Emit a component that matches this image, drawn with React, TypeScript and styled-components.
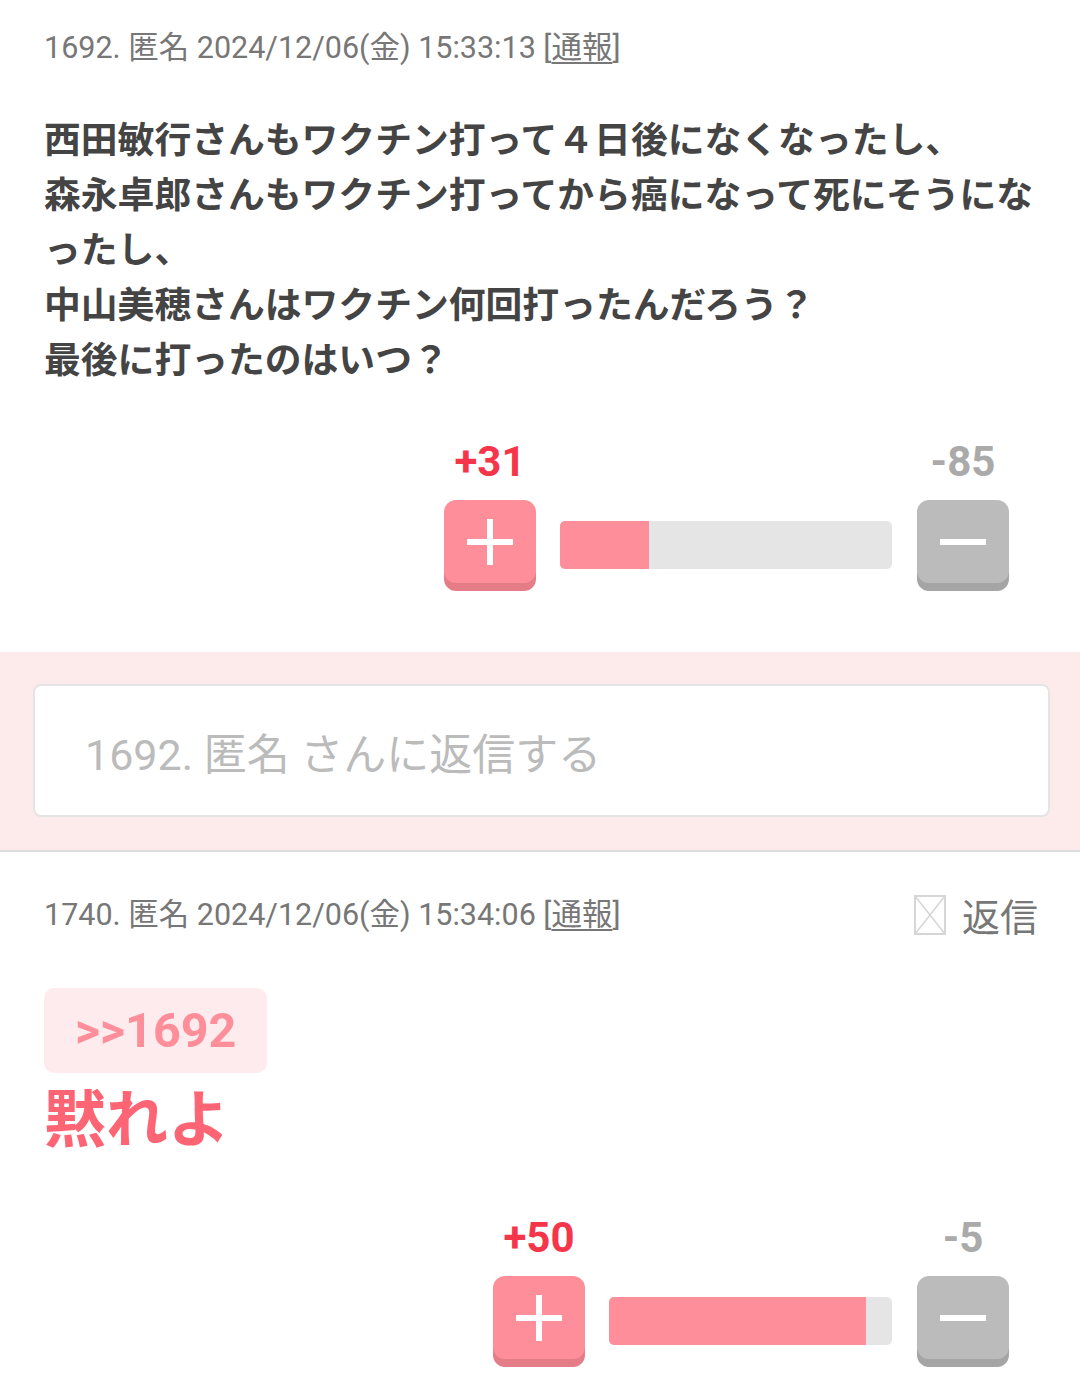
import styled, {createGlobalStyle} from 'styled-components'

const GlobalStyle = createGlobalStyle`
  html, body {
    margin: 0;
    padding: 0;
    background: #fff;
  }
  body {
    font-family: Roboto, "Noto Sans CJK JP", sans-serif;
    -webkit-font-smoothing: antialiased;
  }
`

const Page = styled.main`
  width: 1080px;
  overflow: hidden;
`

const Comment = styled.article<{$top: number}>`
  padding: ${(p) => p.$top}px 40px 0 44px;
`

const MetaRow = styled.div`
  display: flex;
  align-items: center;
  justify-content: space-between;
  min-height: 36px;
`

const Meta = styled.p`
  margin: 0;
  color: #777;
  font-family: Roboto, "Noto Sans CJK JP", sans-serif;
  font-size: 30.5px;
  line-height: 36px;
  white-space: nowrap;

  u {
    text-decoration-thickness: 2px;
    text-underline-offset: 4px;
  }
`

const ReplyLink = styled.span`
  display: flex;
  align-items: center;
  gap: 16px;
  margin-right: 2px;
  color: #777;
  font-family: "Noto Sans CJK JP", sans-serif;
  font-size: 38px;
  line-height: 60px;
`

const Body = styled.p`
  margin: 44px 0 0;
  color: #444;
  font-family: "Noto Sans CJK JP", sans-serif;
  font-size: 36.8px;
  font-weight: 700;
  line-height: 55px;
`

const Quote = styled.div`
  display: inline-block;
  margin-top: 43px;
  padding: 0 31px;
  height: 85px;
  border-radius: 10px;
  background: #fdebed;
  color: #fe8e99;
  font-family: Roboto, sans-serif;
  font-size: 48.5px;
  font-weight: 700;
  line-height: 85px;
`

const Shout = styled.p`
  margin: 6px 0 0;
  color: #fd6474;
  font-family: "Noto Sans CJK JP", sans-serif;
  font-size: 62px;
  font-weight: 700;
  line-height: 72px;
`

const Votes = styled.div<{$top: number}>`
  display: flex;
  justify-content: flex-end;
  align-items: flex-end;
  margin: ${(p) => p.$top}px 31px 0 0;
`

const VoteCol = styled.div`
  display: flex;
  flex-direction: column;
  align-items: center;
  gap: 15px;
  width: 92px;
`

const Count = styled.span<{$up?: boolean}>`
  color: ${(p) => (p.$up ? '#f5364a' : '#aaa')};
  font-family: Roboto, sans-serif;
  font-size: 42px;
  font-weight: 700;
  line-height: 46px;
  white-space: nowrap;
`

const VoteButton = styled.button<{$up?: boolean}>`
  width: 92px;
  height: 83px;
  margin-bottom: 8px;
  border: none;
  border-radius: 12px;
  background: ${(p) => (p.$up ? '#fe8e99' : '#bbbbbb')};
  box-shadow: 0 8px 0 ${(p) => (p.$up ? '#e57d89' : '#a5a5a5')};
  display: flex;
  align-items: center;
  justify-content: center;
  padding: 0;
`

const Track = styled.div`
  align-self: flex-end;
  margin: 0 25px 22px 24px;
  height: 48px;
  border-radius: 5px;
  background: #e5e5e5;
  overflow: hidden;
`

const Fill = styled.div`
  height: 100%;
  background: #fe8e99;
`

const ReplyArea = styled.section`
  margin-top: 61px;
  padding: 32px 30px 33px 33px;
  background: #fdebec;
  border-bottom: 2px solid #dcdcdc;
`

const ReplyInput = styled.div`
  box-sizing: border-box;
  height: 133px;
  padding: 0 50px;
  display: flex;
  align-items: center;
  border: 2px solid #e4e4e4;
  border-radius: 8px;
  background: #fff;
  color: #bbb;
  font-family: Roboto, "Noto Sans CJK JP", sans-serif;
  font-size: 43px;
`

function PlusIcon() {
  return (
    <svg width="46" height="46" viewBox="0 0 46 46">
      <rect x="20" y="0" width="6" height="46" fill="#fff" />
      <rect x="0" y="20" width="46" height="6" fill="#fff" />
    </svg>
  )
}

function MinusIcon() {
  return (
    <svg width="46" height="6" viewBox="0 0 46 6">
      <rect x="0" y="0" width="46" height="6" fill="#fff" />
    </svg>
  )
}

function BrokenBox() {
  return (
    <svg width="32" height="40" viewBox="0 0 32 40">
      <rect x="1" y="1" width="30" height="38" fill="none" stroke="#d6d6d6" strokeWidth="2" />
      <path d="M1 1 L31 39 M31 1 L1 39" stroke="#d6d6d6" strokeWidth="1.5" />
    </svg>
  )
}

type VoteProps = {up: number; down: number; width: number; top: number}

function VoteBar({up, down, width, top}: VoteProps) {
  const ratio = up / (up + down)
  return (
    <Votes $top={top}>
      <VoteCol>
        <Count $up>+{up}</Count>
        <VoteButton $up aria-label="プラス">
          <PlusIcon />
        </VoteButton>
      </VoteCol>
      <Track style={{width}}>
        <Fill style={{width: `${ratio * 100}%`}} />
      </Track>
      <VoteCol>
        <Count>-{down}</Count>
        <VoteButton aria-label="マイナス">
          <MinusIcon />
        </VoteButton>
      </VoteCol>
    </Votes>
  )
}

export default function App() {
  return (
    <Page>
      <GlobalStyle />
      <Comment $top={30}>
        <MetaRow>
          <Meta>
            1692. 匿名 2024/12/06(金) 15:33:13 [<u>通報</u>]
          </Meta>
        </MetaRow>
        <Body>
          西田敏行さんもワクチン打って４日後になくなったし、
          <br />
          森永卓郎さんもワクチン打ってから癌になって死にそうになったし、
          <br />
          中山美穂さんはワクチン何回打ったんだろう？
          <br />
          最後に打ったのはいつ？
        </Body>
        <VoteBar up={31} down={85} width={332} top={54} />
      </Comment>

      <ReplyArea>
        <ReplyInput>1692. 匿名 さんに返信する</ReplyInput>
      </ReplyArea>

      <Comment $top={33}>
        <MetaRow>
          <Meta>
            1740. 匿名 2024/12/06(金) 15:34:06 [<u>通報</u>]
          </Meta>
          <ReplyLink>
            <BrokenBox />
            返信
          </ReplyLink>
        </MetaRow>
        <Quote>&gt;&gt;1692</Quote>
        <Shout>黙れよ</Shout>
        <VoteBar up={50} down={5} width={283} top={64} />
      </Comment>
    </Page>
  )
}
